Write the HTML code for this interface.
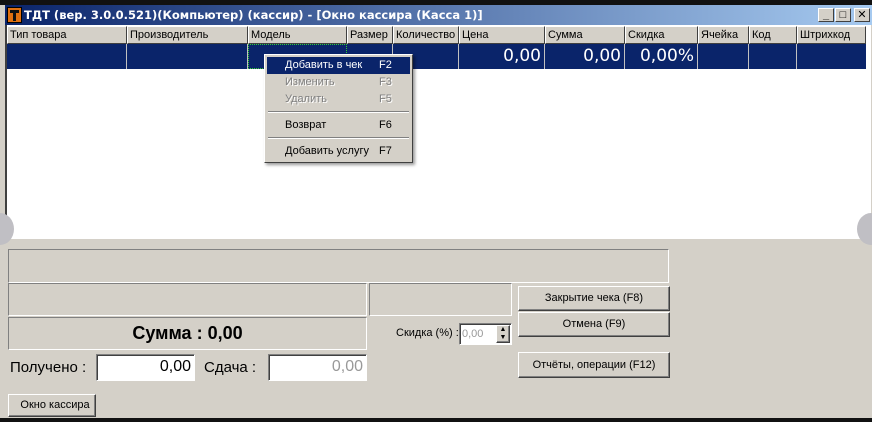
<!DOCTYPE html>
<html><head><meta charset="utf-8"><style>
*{margin:0;padding:0;box-sizing:border-box}
body{width:872px;height:422px;overflow:hidden;background:#d4d0c8;position:relative;font-family:"Liberation Sans","DejaVu Sans",sans-serif;font-size:11px;color:#000}
.a{position:absolute}
.top{left:0;top:0;width:872px;height:5px;background:#111}
.title{left:5px;top:5px;width:867px;height:20px;background:linear-gradient(90deg,#0a246a,#a6caf0);color:#fff;font-weight:bold;font-size:12px;line-height:20px;padding-left:19px;white-space:nowrap;font-family:"DejaVu Sans",sans-serif;font-size:11.5px}
.ico{left:7px;top:7px;width:15px;height:16px;background:#e07010;border:1px solid #000}
.ico i{position:absolute;background:#111}
.wb{top:8px;width:16px;height:14px;background:#d4d0c8;border:1px solid;border-color:#fff #404040 #404040 #fff;font-size:11px;line-height:12px;text-align:center;font-weight:bold;color:#000}
.grid{left:5px;top:25px;width:866px;height:214px;background:#fff;border-left:2px solid #404040}
.hd{top:26px;height:18px;background:#d4d0c8;border:1px solid;border-color:#fff #404040 #404040 #fff;line-height:16px;padding-left:2px;white-space:nowrap;overflow:hidden}
.row{left:7px;top:44px;width:859px;height:25px;background:#0a246a}
.cl{top:44px;height:25px;border-right:1px solid #c0c0c0;color:#fff;font-size:17px;text-align:right;line-height:25px;padding-right:3px;font-family:"DejaVu Sans",sans-serif}
.menu{left:264px;top:54px;width:149px;height:109px;background:#d4d0c8;border:1px solid;border-color:#fff #404040 #404040 #fff;box-shadow:2px 2px 3px rgba(0,0,0,.4)}
.mi{position:absolute;left:2px;width:143px;height:17px;line-height:17px;padding-left:18px}
.mi span{position:absolute;left:112px}
.sep{position:absolute;left:3px;width:141px;border-top:1px solid #808080;border-bottom:1px solid #fff}
.p{border:1px solid;border-color:#808080 #fff #fff #808080}
.btn{background:#d4d0c8;border:1px solid;border-color:#fff #404040 #404040 #fff;box-shadow:inset -1px -1px #808080;text-align:center;font-size:11px}
.inp{background:#fff;border:1px solid;border-color:#808080 #fff #fff #808080;box-shadow:inset 1px 1px #404040;text-align:right;font-size:16px;padding-right:3px;line-height:24px}
.circ{width:28px;height:32px;border-radius:50%;background:#c0bfc4}
</style></head><body>
<div class="a top"></div>
<div class="a title">ТДТ (вер. 3.0.0.521)(Компьютер) (кассир) - [Окно кассира (Касса 1)]</div>
<div class="a ico"><i style="left:2px;top:2px;width:9px;height:3px"></i><i style="left:5px;top:2px;width:3px;height:11px"></i></div>
<div class="a wb" style="left:818px">_</div>
<div class="a wb" style="left:835px">□</div>
<div class="a wb" style="left:854px">✕</div>
<div class="a grid"></div>
<div class="a hd" style="left:7px;width:120px">Тип товара</div>
<div class="a hd" style="left:127px;width:121px">Производитель</div>
<div class="a hd" style="left:248px;width:99px">Модель</div>
<div class="a hd" style="left:347px;width:46px">Размер</div>
<div class="a hd" style="left:393px;width:66px">Количество</div>
<div class="a hd" style="left:459px;width:86px">Цена</div>
<div class="a hd" style="left:545px;width:80px">Сумма</div>
<div class="a hd" style="left:625px;width:73px">Скидка</div>
<div class="a hd" style="left:698px;width:51px">Ячейка</div>
<div class="a hd" style="left:749px;width:48px">Код</div>
<div class="a hd" style="left:797px;width:69px">Штрихкод</div>
<div class="a row"></div>
<div class="a cl" style="left:7px;width:120px"></div>
<div class="a cl" style="left:127px;width:121px"></div>
<div class="a cl" style="left:248px;width:99px;border:1px dotted #3c3;background:#0a246a"></div>
<div class="a cl" style="left:347px;width:46px"></div>
<div class="a cl" style="left:393px;width:66px"></div>
<div class="a cl" style="left:459px;width:86px">0,00</div>
<div class="a cl" style="left:545px;width:80px">0,00</div>
<div class="a cl" style="left:625px;width:73px">0,00%</div>
<div class="a cl" style="left:698px;width:51px"></div>
<div class="a cl" style="left:749px;width:48px"></div>
<div class="a menu">
<div class="mi" style="top:2px;background:#0a246a;color:#fff">Добавить в чек<span>F2</span></div>
<div class="mi" style="top:19px;color:#808080;text-shadow:1px 1px #fff">Изменить<span>F3</span></div>
<div class="mi" style="top:36px;color:#808080;text-shadow:1px 1px #fff">Удалить<span>F5</span></div>
<div class="sep" style="top:56px"></div>
<div class="mi" style="top:62px">Возврат<span>F6</span></div>
<div class="sep" style="top:82px"></div>
<div class="mi" style="top:88px">Добавить услугу<span>F7</span></div>
</div>
<div class="a circ" style="left:-14px;top:213px"></div>
<div class="a circ" style="left:857px;top:213px"></div>
<div class="a p" style="left:8px;top:249px;width:661px;height:34px"></div>
<div class="a p" style="left:8px;top:283px;width:359px;height:33px"></div>
<div class="a p" style="left:369px;top:283px;width:143px;height:33px"></div>
<div class="a p" style="left:8px;top:317px;width:359px;height:33px;text-align:center;font-weight:bold;font-size:18px;line-height:31px">Сумма : 0,00</div>
<div class="a btn" style="left:518px;top:286px;width:152px;height:25px;line-height:23px">Закрытие чека (F8)</div>
<div class="a btn" style="left:518px;top:312px;width:152px;height:25px;line-height:23px">Отмена (F9)</div>
<div class="a btn" style="left:518px;top:352px;width:152px;height:26px;line-height:24px">Отчёты, операции (F12)</div>
<div class="a" style="left:396px;top:327px;font-size:11px">Скидка (%) :</div>
<div class="a inp" style="left:459px;top:323px;width:53px;height:22px;font-size:11px;line-height:20px;text-align:left;padding-left:2px;color:#999">0,00</div>
<div class="a btn" style="left:496px;top:325px;width:14px;height:18px;font-size:7px;line-height:8px">▲<br>▼</div>
<div class="a" style="left:10px;top:359px;font-size:15px">Получено :</div>
<div class="a inp" style="left:96px;top:354px;width:99px;height:27px">0,00</div>
<div class="a" style="left:204px;top:359px;font-size:15px">Сдача :</div>
<div class="a inp" style="left:268px;top:354px;width:99px;height:27px;color:#999">0,00</div>
<div class="a btn" style="left:8px;top:394px;width:88px;height:23px;line-height:21px;padding-left:6px">Окно кассира</div>
<div class="a" style="left:0;top:418px;width:872px;height:4px;background:#111"></div>
</body></html>
